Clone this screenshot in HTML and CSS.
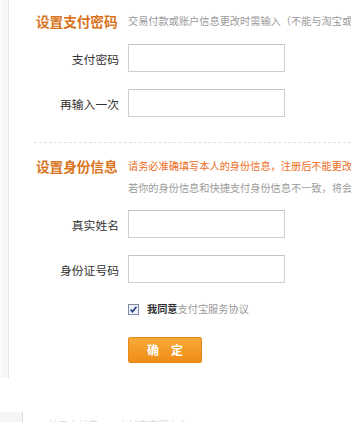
FILE: index.html
```html
<!DOCTYPE html>
<html lang="zh-CN">
<head>
<meta charset="utf-8">
<title>设置支付密码</title>
<link rel="stylesheet" href="styles.css">
</head>
<body>
<div class="page">
  <div class="side"></div>
  <div class="main">
    <div class="head-row">
      <h2 class="title">设置支付密码</h2>
      <div class="desc">交易付款或账户信息更改时需输入（不能与淘宝或支付宝登录密码相同）</div>
    </div>
    <div class="row first">
      <label class="label">支付密码</label>
      <input class="field" type="password">
    </div>
    <div class="row">
      <label class="label">再输入一次</label>
      <input class="field" type="password">
    </div>

    <div class="sep"></div>

    <div class="head-row two">
      <h2 class="title">设置身份信息</h2>
      <div class="desc">
        <div class="warn">请务必准确填写本人的身份信息，注册后不能更改，隐私信息未经本人许可严格保密</div>
        <div>若你的身份信息和快捷支付身份信息不一致，将会自动关闭已开通的快捷支付服务。</div>
      </div>
    </div>
    <div class="row first2">
      <label class="label">真实姓名</label>
      <input class="field" type="text">
    </div>
    <div class="row">
      <label class="label">身份证号码</label>
      <input class="field" type="text">
    </div>

    <div class="row agree">
      <span class="label"></span>
      <span class="check">
        <svg width="11" height="11" viewBox="0 0 11 11">
          <rect x="0.5" y="0.5" width="10" height="10" fill="#eef2f8" stroke="#7f8ea6"/>
          <path d="M2.6 5.6 L4.6 7.8 L8.4 2.8" fill="none" stroke="#23407c" stroke-width="1.6"/>
        </svg>
      </span>
      <span class="agree-text"><b>我同意</b><span class="link">支付宝服务协议</span></span>
    </div>

    <div class="row btn-row">
      <span class="label"></span>
      <button class="btn" type="button">确定</button>
    </div>
  </div>
</div>
<div class="footer">
  <div class="foot-side"></div>
  <div class="foot-text">关于支付宝　　支付宝客服中心</div>
</div>
</body>
</html>
```
FILE: styles.css
```css
html, body {
  margin: 0;
  padding: 0;
  background: #fff;
  overflow: hidden;
}
body {
  font-family: "Noto Sans CJK SC", "Noto Sans", sans-serif;
  color: #333;
  width: 351px;
}
.page {
  display: flex;
  height: 378px;
}
.side {
  flex: none;
  background: #f6f6f6;
  border-left: 2px solid #fbfbfb;
  border-right: 1px solid #e6e6e6;
  box-sizing: border-box;
  width: 9px;
}
.main {
  flex: 1;
  padding-left: 27px;
  padding-top: 11px;
  white-space: nowrap;
  overflow: hidden;
}
.head-row {
  display: flex;
  align-items: flex-start;
  column-gap: 9px;
}
.title {
  margin: 0;
  width: 83px;
  flex: none;
  font-size: 13.7px;
  line-height: 20px;
  font-weight: bold;
  color: #d9741d;
  letter-spacing: -0.1px;
}
.desc {
  font-size: 10.2px;
  line-height: 20px;
  color: #9a9a9a;
}
.two .title,
.two .desc {
  line-height: 22px;
}
.warn {
  color: #ec6d1d;
}
.row {
  display: flex;
  align-items: center;
  column-gap: 9px;
  margin-top: 17px;
}
.row.first {
  margin-top: 13px;
}
.row.first2 {
  margin-top: 11px;
}
.label {
  width: 83px;
  flex: none;
  text-align: right;
  font-size: 11.8px;
  color: #333;
}
.field {
  width: 157px;
  height: 28px;
  box-sizing: border-box;
  margin: 0;
  padding: 0 4px;
  border: 1px solid #cfcfcf;
  border-top-color: #c4c4c4;
  background: #fff;
  outline: none;
}
.sep {
  margin: 25px 0 12px -2px;
  border-top: 1px dashed #e2e2e2;
}
.row.agree {
  margin-top: 18px;
  height: 16px;
  column-gap: 0;
}
.row.agree .label {
  margin-right: 9px;
}
.check {
  display: flex;
  width: 11px;
  height: 11px;
  margin-right: 8px;
}
.agree-text {
  font-size: 10.2px;
  line-height: 16px;
  color: #333;
}
.agree-text b {
  font-weight: bold;
}
.link {
  color: #9a9a9a;
}
.row.btn-row {
  margin-top: 20px;
}
.btn {
  width: 74px;
  height: 26px;
  margin: 0;
  padding: 0 0 0 18px;
  text-align: left;
  border: 1px solid #e5891d;
  border-radius: 2px;
  background: linear-gradient(#f9ab3c, #ef8c14);
  color: #fff;
  font-family: "Noto Sans CJK SC", sans-serif;
  font-size: 12px;
  font-weight: bold;
  letter-spacing: 12px;
  line-height: 24px;
}
.footer {
  display: flex;
  margin-top: 34px;
  height: 10px;
  overflow: hidden;
}
.foot-side {
  width: 23px;
  flex: none;
  background: #f5f5f5;
  border-right: 1px solid #dcdcdc;
  box-sizing: border-box;
}
.foot-text {
  padding-left: 25px;
  padding-top: 7px;
  font-size: 10px;
  line-height: 12px;
  color: #dadada;
  white-space: nowrap;
}
```
